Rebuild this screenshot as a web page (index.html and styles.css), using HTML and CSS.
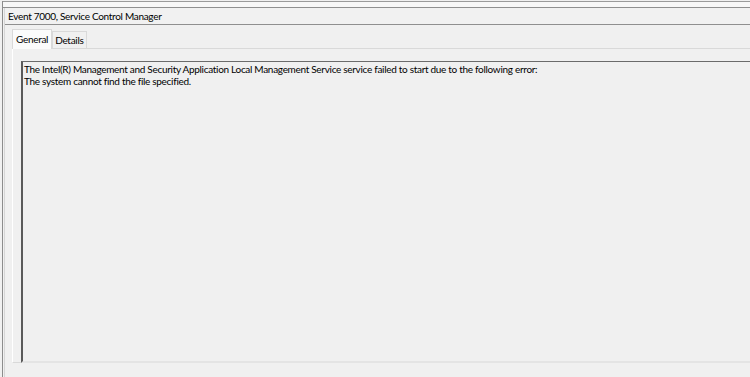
FILE: index.html
```html
<!DOCTYPE html>
<html lang="en">
<head>
    <meta charset="UTF-8">
    <title>Event Properties</title>
    <link rel="stylesheet" href="styles.css">
</head>
<body>
    <div class="frame">
        <div class="top-strip"></div>
        <div class="pane">
            <div class="title-bar">Event 7000, Service Control Manager</div>
            <div class="tabs">
                <div class="tab active">General</div>
                <div class="tab">Details</div>
            </div>
            <div class="tab-panel">
                <div class="message-box">
                    <p>The Intel(R) Management and Security Application Local Management Service service failed to start due to the following error:</p>
                    <p>The system cannot find the file specified.</p>
                </div>
            </div>
        </div>
    </div>
</body>
</html>
```

FILE: styles.css
```css
html, body {
    margin: 0;
    padding: 0;
    background-color: #f0f0f0;
    width: 750px;
    height: 377px;
    overflow: hidden;
}
body {
    font-family: Lato, "Noto Sans", sans-serif;
    font-size: 10px;
    letter-spacing: -0.3px;
    color: #000;
}
.frame {
    margin-left: 2px;
    height: 377px;
    border-left: 1px solid #8c8c8c;
    background-color: #f0f0f0;
}
.top-strip {
    height: 5px;
    border-top: 1px solid #9a9a9a;
    border-bottom: 1px solid #8f8f8f;
    margin-top: 1px;
    background-color: #f7f7f7;
}
.pane {
    margin-left: 1px;
    border-left: 1px solid #d6d6d6;
    height: 370px;
}
.title-bar {
    height: 15px;
    padding: 1px 0 0 3px;
    line-height: 15px;
    border-bottom: 1px solid #8f8f8f;
    background-color: #f1f1f1;
}
.tabs {
    display: flex;
    align-items: flex-end;
    padding-left: 7px;
    height: 23px;
}
.tab {
    height: 16px;
    line-height: 16px;
    padding: 0 2px;
    border: 1px solid #d9d9d9;
    border-bottom: none;
    background-color: #f0f0f0;
}
.tab.active {
    height: 19px;
    line-height: 18px;
    padding: 0 3px;
    background-color: #fbfbfb;
    position: relative;
    top: 1px;
}
.tab-panel {
    margin-left: 7px;
    border-left: 1px solid #fff;
    border-top: 1px solid #d9d9d9;
    border-bottom: 1px solid #d9d9d9;
    height: 315px;
    padding: 12px 0 0 8px;
    box-sizing: border-box;
}
.message-box {
    height: 302px;
    box-sizing: border-box;
    border-top: 1px solid #6b6b6b;
    border-left: 2px solid #5a5a5a;
    border-bottom: 2px solid #e4e4e4;
    padding: 1px 0 0 1px;
}
.message-box p {
    margin: 0;
    line-height: 12px;
    white-space: nowrap;
}
```
